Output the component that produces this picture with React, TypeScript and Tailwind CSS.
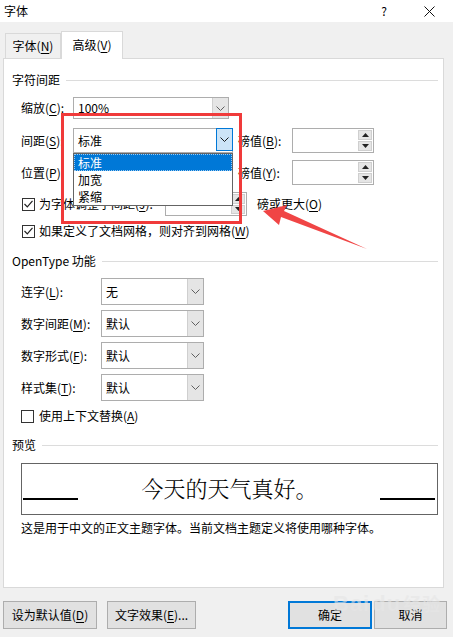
import React from "react";

const Chevron = ({ color = "#606060" }: { color?: string }) => (
  <svg width="9" height="5" viewBox="0 0 9 5">
    <path d="M0.5 0.5 L4.5 4.5 L8.5 0.5" fill="none" stroke={color} strokeWidth="1" />
  </svg>
);

const Select = ({
  w,
  h,
  value,
  focused = false,
}: {
  w: number;
  h: number;
  value: string;
  focused?: boolean;
}) => (
  <div
    className="flex border border-[#adadad] bg-white"
    style={{ width: w, height: h }}
  >
    <div className="flex-1 flex items-center pl-[4px] text-[12px] text-black">{value}</div>
    {focused ? (
      <div className="w-[17px] h-full flex items-center justify-center bg-[#cce4f7] border border-[#0078d7] -m-px">
        <Chevron color="#1a1a1a" />
      </div>
    ) : (
      <div className="w-[16px] h-full flex items-center justify-center bg-[#e5e5e5] border-l border-[#cfcfcf]">
        <Chevron />
      </div>
    )}
  </div>
);

const Tri = ({ up }: { up: boolean }) => (
  <svg width="7" height="4" viewBox="0 0 7 4">
    <path d={up ? "M0 4 L3.5 0 L7 4 Z" : "M0 0 L3.5 4 L7 0 Z"} fill="#222" />
  </svg>
);

const Spin = ({ w, h }: { w: number; h: number }) => (
  <div className="flex border border-[#adadad] bg-white" style={{ width: w, height: h }}>
    <div className="flex-1" />
    <div className="w-[16px] flex flex-col gap-px p-px">
      <div className="flex-1 flex items-center justify-center bg-[#e5e5e5] border border-[#cfcfcf]">
        <Tri up />
      </div>
      <div className="flex-1 flex items-center justify-center bg-[#e5e5e5] border border-[#cfcfcf]">
        <Tri up={false} />
      </div>
    </div>
  </div>
);

const Check = ({ checked }: { checked: boolean }) => (
  <div className="w-[13px] h-[13px] border border-[#333] bg-white flex items-center justify-center shrink-0">
    {checked && (
      <svg width="9" height="8" viewBox="0 0 9 8">
        <path d="M0.5 4 L3.3 6.8 L8.5 0.8" fill="none" stroke="#222" strokeWidth="1.2" />
      </svg>
    )}
  </div>
);

const U = ({ c }: { c: string }) => <span className="underline underline-offset-2">{c}</span>;

const Header = ({ text, mt }: { text: React.ReactNode; mt: string }) => (
  <div className={`flex items-center h-[16px] pl-[8px] pr-[5px] ${mt}`}>
    <span className="text-[12px] leading-none whitespace-nowrap">{text}</span>
    <div className="flex-1 h-px bg-[#dcdcdc] ml-[6px]" />
  </div>
);

export default function App() {
  const font = { fontFamily: '"Noto Sans CJK SC", "Liberation Sans", sans-serif' };
  return (
    <div
      className="relative w-[453px] h-[637px] bg-[#f0f0f0] overflow-hidden text-black text-[12px]"
      style={font}
    >
      {/* title bar */}
      <div className="h-[22px] bg-white flex items-center pl-[4px] relative">
        <span className="text-[12px] leading-none">字体</span>
        <div className="flex-1" />
        <span className="text-[12px] leading-none mr-[37px]">?</span>
        <svg width="11" height="11" viewBox="0 0 11 11" className="mr-[18px]">
          <path d="M0.5 0.5 L10.5 10.5 M10.5 0.5 L0.5 10.5" stroke="#111" strokeWidth="1" />
        </svg>
      </div>

      {/* tabs */}
      <div className="h-[36px] flex items-end pl-[5px]">
        <div className="w-[56px] h-[25px] border border-b-0 border-[#d9d9d9] bg-[#f0f0f0] flex items-center justify-center text-[12px]">
          <span>
            字体(<U c="N" />)
          </span>
        </div>
        <div className="w-[62px] h-[28px] -mb-px relative z-10 border border-b-0 border-[#d9d9d9] bg-white flex items-center justify-center text-[12px] pb-[2px]">
          <span>
            高级(<U c="V" />)
          </span>
        </div>
      </div>

      {/* panel */}
      <div className="ml-[3px] w-[441px] h-[530px] border border-[#d9d9d9] bg-white flex flex-col">
        <Header text="字符间距" mt="mt-[13px]" />

        {/* 缩放 */}
        <div className="flex items-center mt-[9px] h-[22px] pl-[17px]">
          <span className="w-[52px] whitespace-nowrap">
            缩放(<U c="C" />):
          </span>
          <Select w={156} h={22} value="100%" />
        </div>

        {/* 间距 */}
        <div className="flex items-center mt-[9px] h-[25px] pl-[17px]">
          <span className="w-[52px] whitespace-nowrap">
            间距(<U c="S" />):
          </span>
          <Select w={160} h={25} value="标准" focused />
          <span className="ml-[5px] w-[54px] whitespace-nowrap">
            磅值(<U c="B" />):
          </span>
          <Spin w={82} h={25} />
        </div>

        {/* 位置 */}
        <div className="flex items-center mt-[7px] h-[25px] pl-[17px]">
          <span className="w-[52px] whitespace-nowrap">
            位置(<U c="P" />):
          </span>
          <Select w={160} h={25} value="" />
          <span className="ml-[5px] w-[54px] whitespace-nowrap">
            磅值(<U c="Y" />):
          </span>
          <Spin w={82} h={25} />
        </div>

        {/* 为字体调整字间距 */}
        <div className="flex items-center mt-[7px] h-[24px] pl-[18px]">
          <Check checked />
          <span className="ml-[4px] w-[126px] whitespace-nowrap">
            为字体调整字间距(<U c="J" />):
          </span>
          <Spin w={82} h={24} />
          <span className="ml-[10px] whitespace-nowrap">
            磅或更大(<U c="O" />)
          </span>
        </div>

        {/* 如果定义了文档网格 */}
        <div className="flex items-center mt-[7px] h-[16px] pl-[18px]">
          <Check checked />
          <span className="ml-[4px] whitespace-nowrap">
            如果定义了文档网格，则对齐到网格(<U c="W" />)
          </span>
        </div>

        <Header text="OpenType 功能" mt="mt-[14px]" />

        {[
          ["连字", "L", "无"],
          ["数字间距", "M", "默认"],
          ["数字形式", "F", "默认"],
          ["样式集", "T", "默认"],
        ].map(([label, key, val], i) => (
          <div
            key={label}
            className={`flex items-center h-[27px] pl-[17px] ${i === 0 ? "mt-[9px]" : "mt-[5px]"}`}
          >
            <span className="w-[80px] whitespace-nowrap">
              {label}(<U c={key} />):
            </span>
            <Select w={103} h={27} value={val} />
          </div>
        ))}

        <div className="flex items-center mt-[7px] h-[16px] pl-[17px]">
          <Check checked={false} />
          <span className="ml-[5px] whitespace-nowrap">
            使用上下文替换(<U c="A" />)
          </span>
        </div>

        <Header text="预览" mt="mt-[13px]" />

        <div className="ml-[17px] mt-[10px] w-[417px] h-[52px] border border-[#646464] flex items-center relative">
          <div className="absolute left-[1px] top-[34px] w-[55px] h-[1.5px] bg-black" />
          <div className="absolute right-[2px] top-[34px] w-[55px] h-[1.5px] bg-black" />
          <div
            className="w-full text-center text-[22px] leading-none pb-[2px] font-light"
            style={{ fontFamily: '"Noto Serif CJK SC", "Noto Sans CJK SC", serif' }}
          >
            今天的天气真好。
          </div>
        </div>

        <div className="mt-[5px] h-[16px] pl-[17px] flex items-center whitespace-nowrap text-[12px]">
          这是用于中文的正文主题字体。当前文档主题定义将使用哪种字体。
        </div>
      </div>

      {/* buttons */}
      <div className="flex mt-[13px] h-[28px] pl-[3px]">
        <div className="w-[94px] h-[28px] bg-[#e1e1e1] border border-[#adadad] flex items-center justify-center">
          <span>
            设为默认值(<U c="D" />)
          </span>
        </div>
        <div className="ml-[10px] w-[89px] h-[28px] bg-[#e1e1e1] border border-[#adadad] flex items-center justify-center">
          <span>
            文字效果(<U c="E" />)...
          </span>
        </div>
        <div className="ml-[92px] w-[84px] h-[28px] bg-[#e1e1e1] border-2 border-[#0078d7] flex items-center justify-center">
          确定
        </div>
        <div className="ml-[2px] w-[73px] h-[28px] bg-[#e1e1e1] border border-[#adadad] flex items-center justify-center">
          取消
        </div>
      </div>

      {/* dropdown list overlay */}
      <div className="absolute left-[73px] top-[153px] w-[160px] h-[53px] bg-white border border-[#646464] flex flex-col">
        <div className="h-[17px] bg-[#0078d7] text-white flex items-center pl-[3px] border border-dotted border-[#9cc9f0]">
          标准
        </div>
        <div className="h-[17px] flex items-center pl-[4px]">加宽</div>
        <div className="h-[17px] flex items-center pl-[4px]">紧缩</div>
      </div>

      {/* red rectangle */}
      <div className="absolute left-[61px] top-[113px] w-[181px] h-[111px] border-[3px] border-[#f03a3a]" />

      {/* red arrow */}
      <svg className="absolute left-0 top-0 pointer-events-none" width="453" height="637">
        <polygon
          points="263,211 287,205 284,211 367,249 281,217 279,225"
          fill="#f04545"
        />
      </svg>

      {/* watermark */}
      <div
        className="absolute left-[333px] top-[593px] text-[22px] font-bold text-[#e6e6e6] leading-none tracking-[1px] pointer-events-none opacity-60"
        style={{ fontFamily: '"Liberation Sans", sans-serif' }}
      >
        Bai<span className="mx-[2px]">du</span>
        <span style={{ fontFamily: '"Noto Sans CJK SC", sans-serif' }} className="text-[18px]">
          经验
        </span>
      </div>
    </div>
  );
}
